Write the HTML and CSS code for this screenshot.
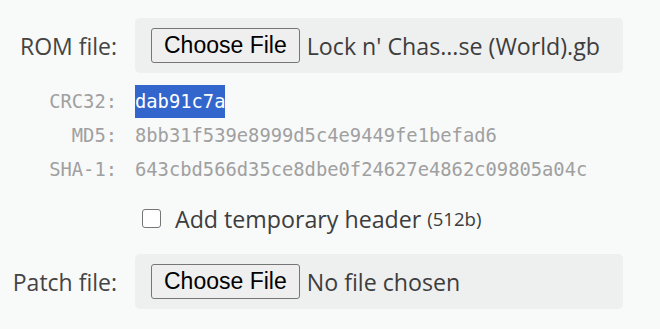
FILE: index.html
```html
<!DOCTYPE html>
<html>
<head>
    <meta charset="UTF-8">
    <title>RomPatcher</title>
    <link rel="stylesheet" href="styles.css">
</head>
<body>
    <div class="form">
        <div class="row">
            <label class="row-label">ROM file:</label>
            <div class="file-box">
                <span class="file-btn">Choose File</span>
                <span class="file-name">Lock n' Chas...se (World).gb</span>
            </div>
        </div>

        <div class="hashes">
            <div class="hash-label">CRC32:</div>
            <div class="hash-value"><span class="selected">dab91c7a</span></div>
            <div class="hash-label">MD5:</div>
            <div class="hash-value">8bb31f539e8999d5c4e9449fe1befad6</div>
            <div class="hash-label">SHA-1:</div>
            <div class="hash-value">643cbd566d35ce8dbe0f24627e4862c09805a04c</div>
        </div>

        <div class="row check-row">
            <div></div>
            <label class="check">
                <span class="check-box"></span>
                Add temporary header <small>(512b)</small>
            </label>
        </div>

        <div class="row patch-row">
            <label class="row-label">Patch file:</label>
            <div class="file-box">
                <span class="file-btn">Choose File</span>
                <span class="file-name">No file chosen</span>
            </div>
        </div>
    </div>
</body>
</html>
```

FILE: styles.css
```css
body {
    margin: 0;
    background: #f8f9f9;
    font-family: "Open Sans", Arial, sans-serif;
    color: #444;
}
.form {
    padding-top: 18px;
}
.row {
    display: grid;
    grid-template-columns: 117px 488px;
    column-gap: 18px;
    align-items: center;
}
.row-label {
    text-align: right;
    font-size: 23px;
}
.file-box {
    display: flex;
    align-items: center;
    height: 55px;
    padding: 0 16px;
    background: #eeefef;
    border-radius: 5px;
    box-sizing: border-box;
}
.file-btn {
    display: inline-flex;
    align-items: center;
    height: 35px;
    padding: 0 12px;
    box-sizing: border-box;
    border: 1px solid #767676;
    border-radius: 3px;
    background: #efefef;
    color: #000;
    font-family: "Liberation Sans", Arial, sans-serif;
    font-size: 23px;
}
.file-name {
    margin-left: 7px;
    font-size: 23.2px;
    color: #3d3d3d;
    white-space: nowrap;
}
.hashes {
    display: grid;
    grid-template-columns: 117px auto;
    column-gap: 18px;
    margin-top: 12px;
    font-family: "DejaVu Sans Mono", monospace;
    font-size: 18.8px;
    color: #a0a0a0;
}
.hash-label, .hash-value {
    line-height: 34px;
    height: 34px;
}
.hash-label {
    text-align: right;
}
.selected {
    display: inline-block;
    line-height: 33px;
    background: #3366cc;
    color: #fff;
}
.check-row {
    margin-top: 13px;
    height: 37px;
}
.check {
    display: flex;
    align-items: center;
    margin-left: 7px;
    font-size: 23.2px;
    color: #3d3d3d;
}
.check-box {
    width: 19px;
    height: 19px;
    margin-right: 14px;
    box-sizing: border-box;
    border: 1.5px solid #767676;
    border-radius: 3px;
    background: #fff;
}
.check small {
    margin-left: 6px;
    font-size: 18.6px;
}
.patch-row {
    margin-top: 17px;
}
```
